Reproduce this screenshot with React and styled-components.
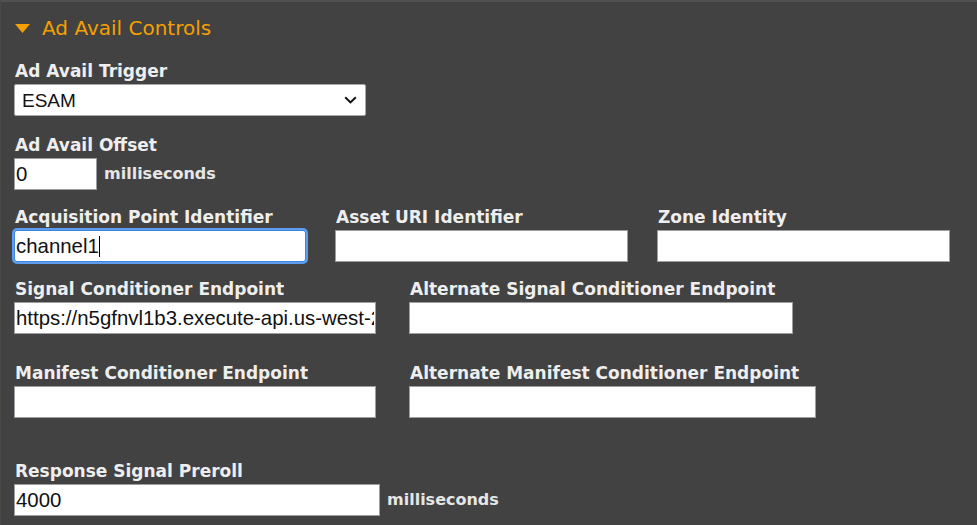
import React from 'react';
import styled, { createGlobalStyle } from 'styled-components';

const GlobalStyle = createGlobalStyle`
  html, body {
    margin: 0;
    padding: 0;
    background: #424242;
  }
  * { box-sizing: border-box; }
`;

const Panel = styled.div`
  min-height: 100vh;
  background: #424242;
  border-top: 2px solid #515151;
  border-left: 1px solid #4a4a4a;
  padding: 14px 14px 0 13px;
  font-family: "DejaVu Sans", Verdana, sans-serif;
`;

const Header = styled.div`
  display: flex;
  align-items: center;
  gap: 12px;
  height: 24px;
  padding-left: 1px;
  color: #f5a000;
  font-size: 20px;
  line-height: 24px;
`;

const Row = styled.div`
  display: flex;
  align-items: flex-start;
  gap: ${p => p.$gap || 0}px;
  margin-top: ${p => p.$top || 0}px;
`;

const Field = styled.div`
  display: flex;
  flex-direction: column;
  width: ${p => (p.$width ? `${p.$width}px` : 'auto')};
`;

const Label = styled.div`
  font-size: 17px;
  font-weight: 700;
  line-height: 20px;
  color: #eeeeee;
  margin-bottom: 3px;
  padding-left: 1px;
  white-space: nowrap;
`;

const Inline = styled.div`
  display: flex;
  align-items: center;
  gap: 7px;
`;

const Unit = styled.span`
  font-size: 16px;
  font-weight: 700;
  color: #e6e6e6;
  line-height: 20px;
`;

const Box = styled.div`
  position: relative;
`;

const TextInput = styled.input`
  display: block;
  width: ${p => p.$width}px;
  height: 32px;
  margin: 0;
  padding: 0 1px;
  border: 1px solid ${p => (p.$focused ? '#3f86e0' : '#9c9ea3')};
  border-radius: ${p => (p.$focused ? '3px' : '0')};
  box-shadow: ${p => (p.$focused ? '0 0 0 2px #5c9ded' : 'none')};
  background: #ffffff;
  color: #111;
  font-family: "Liberation Sans", Arial, sans-serif;
  font-size: 20.4px;
  outline: none;
`;

const Caret = styled.span`
  position: absolute;
  left: 85px;
  top: 6px;
  width: 1px;
  height: 21px;
  background: #000;
`;

const SelectBox = styled.select`
  display: block;
  width: 352px;
  height: 32px;
  margin: 0;
  padding: 0 30px 0 7px;
  border: 1px solid #a7a9ad;
  border-radius: 2px;
  background: #ffffff;
  color: #111;
  font-family: "Liberation Sans", Arial, sans-serif;
  font-size: 19px;
  appearance: none;
  -webkit-appearance: none;
  outline: none;
`;

const Chevron = styled.svg`
  position: absolute;
  right: 9px;
  top: 12px;
  pointer-events: none;
`;

const Toggle = () => (
  <svg width="15" height="9" viewBox="0 0 15 9">
    <polygon points="0,0 15,0 7.5,9" fill="#f5a000" />
  </svg>
);

export default function App() {
  return (
    <>
      <GlobalStyle />
      <Panel>
        <Header>
          <Toggle />
          <span>Ad Avail Controls</span>
        </Header>

        <Row $top={21}>
          <Field>
            <Label>Ad Avail Trigger</Label>
            <Box>
              <SelectBox defaultValue="ESAM">
                <option>ESAM</option>
                <option>SCTE-35 Splice Insert</option>
                <option>SCTE-35 Time Signal APOS</option>
              </SelectBox>
              <Chevron width="13" height="8" viewBox="0 0 13 8">
                <polyline points="1.2,1.2 6.5,6.4 11.8,1.2" fill="none" stroke="#111" strokeWidth="2" />
              </Chevron>
            </Box>
          </Field>
        </Row>

        <Row $top={19}>
          <Field>
            <Label>Ad Avail Offset</Label>
            <Inline>
              <TextInput $width={83} defaultValue="0" />
              <Unit>milliseconds</Unit>
            </Inline>
          </Field>
        </Row>

        <Row $top={17} $gap={29}>
          <Field $width={292}>
            <Label>Acquisition Point Identifier</Label>
            <Box>
              <TextInput $width={292} $focused defaultValue="channel1" />
              <Caret />
            </Box>
          </Field>
          <Field $width={293}>
            <Label>Asset URI Identifier</Label>
            <TextInput $width={293} />
          </Field>
          <Field $width={293}>
            <Label>Zone Identity</Label>
            <TextInput $width={293} />
          </Field>
        </Row>

        <Row $top={17} $gap={33}>
          <Field $width={362}>
            <Label>Signal Conditioner Endpoint</Label>
            <TextInput $width={362} defaultValue="https://n5gfnvl1b3.execute-api.us-west-2.amazonaws.com/Prod/esam" />
          </Field>
          <Field $width={384}>
            <Label>Alternate Signal Conditioner Endpoint</Label>
            <TextInput $width={384} />
          </Field>
        </Row>

        <Row $top={29} $gap={33}>
          <Field $width={362}>
            <Label>Manifest Conditioner Endpoint</Label>
            <TextInput $width={362} />
          </Field>
          <Field $width={407}>
            <Label>Alternate Manifest Conditioner Endpoint</Label>
            <TextInput $width={407} />
          </Field>
        </Row>

        <Row $top={43}>
          <Field>
            <Label>Response Signal Preroll</Label>
            <Inline>
              <TextInput $width={366} defaultValue="4000" />
              <Unit>milliseconds</Unit>
            </Inline>
          </Field>
        </Row>
      </Panel>
    </>
  );
}
